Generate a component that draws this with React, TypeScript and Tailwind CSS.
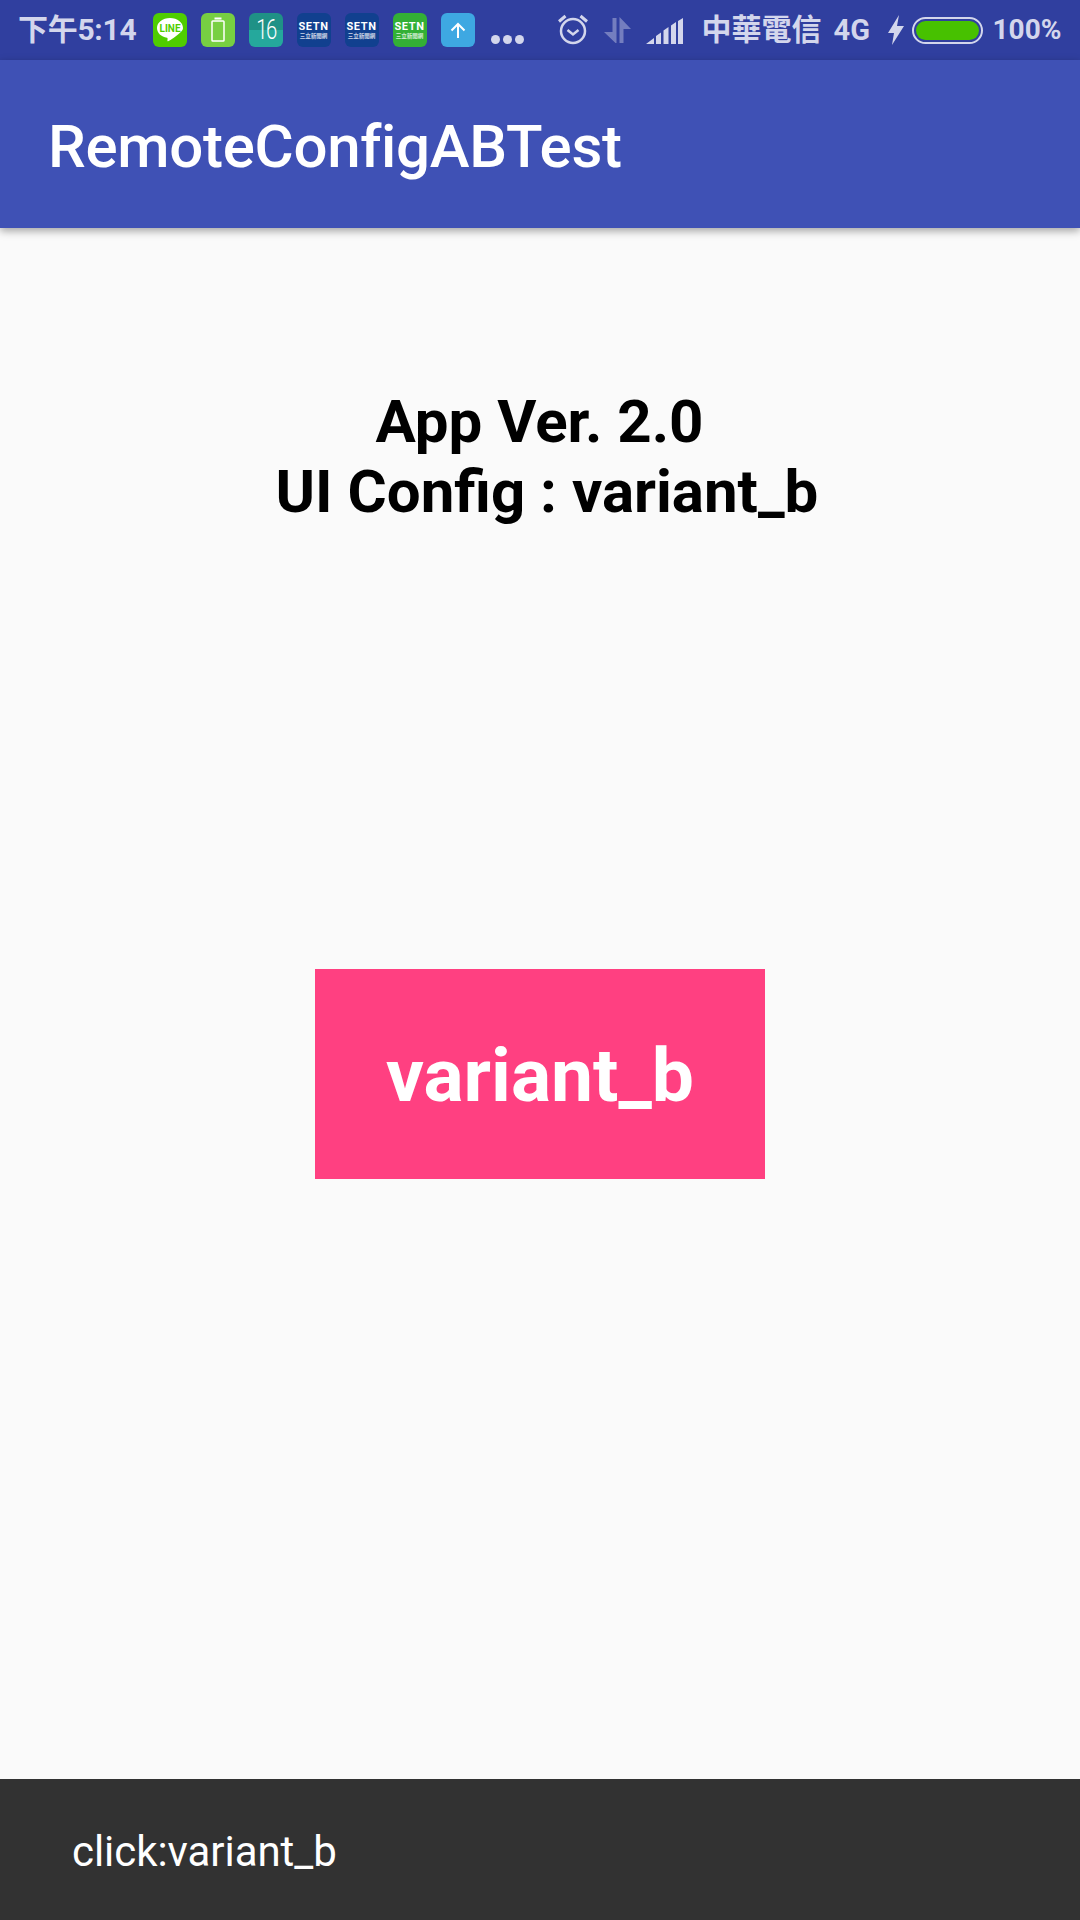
const sans = "font-['Roboto','Noto_Sans_CJK_TC',sans-serif]";

function Tile({ bg, children }: { bg: string; children: React.ReactNode }) {
  return (
    <div className={`w-[34px] h-[34px] rounded-[6px] flex flex-col items-center justify-center overflow-hidden shrink-0 ${bg}`}>
      {children}
    </div>
  );
}

function Setn() {
  return (
    <>
      <span className="text-white text-[11px] leading-[9px] font-bold tracking-[0.6px]">SETN</span>
      <span className="text-white/80 text-[5.500px] leading-[6px] mt-[2px] whitespace-nowrap">三立新聞網</span>
    </>
  );
}

export default function App() {
  return (
    <div className={`w-[1080px] h-[1920px] flex flex-col bg-[#fafafa] overflow-hidden ${sans}`}>
      {/* status bar */}
      <div className="h-[60px] shrink-0 bg-[#303f9f] flex items-center text-[#d3d6ec] font-bold text-[28px] leading-none">
        <span className="ml-[18px] w-[134.500px] shrink-0 text-[30px] font-bold tracking-[-0.3px]">下午5:14</span>
        <div className="flex gap-[14px] items-center">
          <Tile bg="bg-[#4fcd00]">
            <svg width="30" height="30" viewBox="0 0 30 30">
              <path d="M15 3C7.500 3 2 7.500 2 13c0 5 4.200 8.800 10 9.700.8.200.6 1.500.4 3 0 .7.500.8 1.100.4 2.500-1.500 8-4.700 11.500-8.300C27 16 28 14.700 28 13c0-5.500-5.500-10-13-10z" fill="#fff" />
              <text x="15" y="16.500" textAnchor="middle" fontSize="10" fontWeight="700" fill="#4fcd00" fontFamily="Roboto">LINE</text>
            </svg>
          </Tile>
          <Tile bg="bg-[#77cf42]">
            <svg width="18" height="30" viewBox="0 0 18 30" fill="none" stroke="#fff" strokeWidth="1.500">
              <rect x="3" y="6" width="12" height="20" rx="0.800" />
              <path d="M5.500 3.500h7" strokeWidth="1.800" />
            </svg>
          </Tile>
          <div className="w-[34px] h-[34px] rounded-[6px] overflow-hidden relative shrink-0 flex flex-col">
            <div className="h-[17px] bg-[#1f9186]" />
            <div className="h-[17px] bg-[#25a89c]" />
            <span className="absolute inset-0 flex items-center justify-center text-white text-[27px] font-light leading-none tracking-[-2px] scale-x-75">16</span>
          </div>
          <Tile bg="bg-[#11408f]"><Setn /></Tile>
          <Tile bg="bg-[#11408f]"><Setn /></Tile>
          <Tile bg="bg-[#33b035]"><Setn /></Tile>
          <Tile bg="bg-[#3ea8e2]">
            <svg width="18" height="18" viewBox="0 0 18 18" fill="none" stroke="#fff" strokeWidth="2">
              <path d="M9 17V3M2.500 9.500L9 3l6.500 6.500" />
            </svg>
          </Tile>
        </div>
        <div className="flex gap-[3px] ml-[16px] mt-[18px] shrink-0">
          <span className="w-[9px] h-[9px] rounded-full bg-[#d3d6ec]" />
          <span className="w-[9px] h-[9px] rounded-full bg-[#d3d6ec]" />
          <span className="w-[9px] h-[9px] rounded-full bg-[#d3d6ec]" />
        </div>
        <svg className="ml-[33px] shrink-0 mt-[-2px]" width="32" height="32" viewBox="0 0 32 32" fill="none" stroke="#d3d6ec" strokeWidth="2.500">
          <circle cx="16" cy="18" r="12" />
          <path d="M10.500 17l5.500 4.500 5.500-4.500" />
          <path d="M2 8.500L8.500 3M30 8.500L23.500 3" strokeWidth="3" />
        </svg>
        <svg className="ml-[15px] shrink-0" width="27" height="27" viewBox="0 0 27 27" fill="#d3d6ec" fillOpacity="0.42">
          <path d="M8.500 1h4v25h-1L0 15h8.500zM15.500 0L27 12h-7.500v14h-4z" />
        </svg>
        <svg className="ml-[15px] shrink-0 mt-[1px]" width="37" height="26" viewBox="0 0 37 26" fill="#d3d6ec">
          <path d="M0 26l8-6v6zM10 26v-8l5-3.500V26zM17.500 26V12.500l5-3.500v17zM25 26V7.500L30 4v22zM32 26V3l5-3v26z" />
        </svg>
        <span className="ml-[19px] w-[132px] shrink-0 text-[30px] font-bold">中華電信</span>
        <span className="w-[54px] shrink-0 text-[29px]">4G</span>
        <svg className="shrink-0" width="16" height="30" viewBox="0 0 16 30" fill="#d3d6ec">
          <path d="M11 0L0 18h6L4 30l12-19H9z" />
        </svg>
        <div className="ml-[8px] w-[71px] h-[27px] shrink-0 rounded-full border-[2px] border-[#d3d6ec] p-[2px]">
          <div className="w-full h-full rounded-full bg-[#47c100]" />
        </div>
        <span className="ml-[10px] shrink-0">100%</span>
      </div>

      {/* toolbar */}
      <div className="h-[168px] shrink-0 bg-[#3f51b5] shadow-[0_3px_8px_rgba(0,0,0,0.35)] relative z-10 flex items-center pl-[48px]">
        <h1 className="text-white text-[60px] font-medium leading-none tracking-[-0.3px] mt-[5px]">RemoteConfigABTest</h1>
      </div>

      {/* content */}
      <main className="flex-1 flex flex-col items-center">
        <div className="mt-[159px] text-black text-[60px] font-bold leading-[70px] text-center whitespace-pre ml-[-1px]">
          <div>App Ver. 2.0</div>
          <div>{" UI Config : variant_b"}</div>
        </div>
        <button className="mt-[442px] w-[450px] h-[210px] bg-[#ff4081] text-white text-[75px] font-bold leading-none pt-[3px]">
          variant_b
        </button>
      </main>

      {/* snackbar */}
      <div className="h-[141px] shrink-0 bg-[#323232] flex items-center pl-[72px]">
        <span className="text-white text-[42px] leading-none tracking-[-0.05px] mt-[4px]">click:variant_b</span>
      </div>
    </div>
  );
}
